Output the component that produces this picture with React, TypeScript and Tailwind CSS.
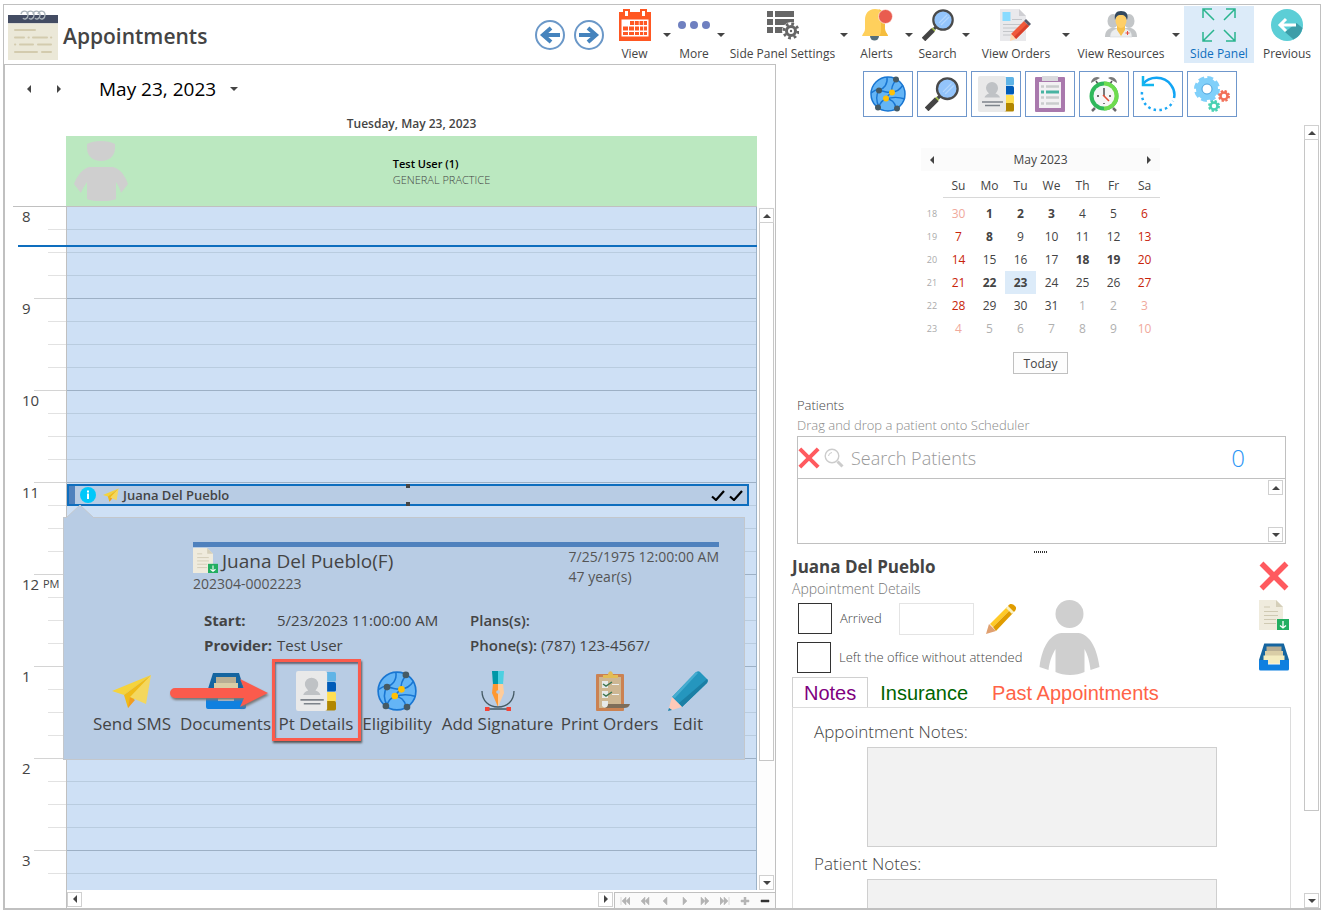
import { useState, type ReactNode } from 'react'

type IconProps = { className?: string }

const HOURS = ['8', '9', '10', '11', '12', '1', '2', '3']

const WEEKDAYS = ['Su', 'Mo', 'Tu', 'We', 'Th', 'Fr', 'Sa']

const WEEKS = [
  { no: 18, days: [30, 1, 2, 3, 4, 5, 6] },
  { no: 19, days: [7, 8, 9, 10, 11, 12, 13] },
  { no: 20, days: [14, 15, 16, 17, 18, 19, 20] },
  { no: 21, days: [21, 22, 23, 24, 25, 26, 27] },
  { no: 22, days: [28, 29, 30, 31, 1, 2, 3] },
  { no: 23, days: [4, 5, 6, 7, 8, 9, 10] },
]

// days that already have appointments
const BUSY_DAYS = [1, 2, 3, 8, 18, 19, 22, 23]

const TRIANGLES = {
  left: 'M6 0v8L2 4z',
  right: 'M2 0v8l4-4z',
  up: 'M0 6h8L4 2z',
  down: 'M0 2h8L4 6z',
}

function Triangle({ dir, className = 'w-2 h-2 text-[#444]' }: { dir: keyof typeof TRIANGLES; className?: string }) {
  return (
    <svg viewBox="0 0 8 8" className={className} fill="currentColor" aria-hidden="true">
      <path d={TRIANGLES[dir]} />
    </svg>
  )
}

function NotepadIcon({ className }: IconProps) {
  return (
    <svg viewBox="0 0 50 50" className={className} aria-hidden="true">
      <path fill="#ebe8d8" d="M0 5h50v45H0z" />
      <path fill="#434c63" d="M0 5h50v8H0z" />
      <path fill="#d9d8d2" d="M0 13h50v1H0z" />
      <g fill="none" stroke="#a9b3ba" strokeWidth="1.400">
        <path d="M13 4c1-4 7-4 7 1 0 4-4 5-5 3" />
        <path d="M19 4c1-4 7-4 7 1 0 4-4 5-5 3" />
        <path d="M25 4c1-4 7-4 7 1 0 4-4 5-5 3" />
        <path d="M30 4c1-4 7-4 7 1 0 4-4 5-5 3" />
      </g>
      <path
        stroke="#d3cbae"
        strokeWidth="2"
        strokeLinecap="round"
        d="M7 20h20M7 27.500h9M20.500 27.500h.3M25 27.500h14M43 27.500h.3M7 34.500h.3M12 34.500h13M30 34.500h13M7 42h22M34 42h9"
      />
    </svg>
  )
}

function NavArrowIcon({ className, flip }: IconProps & { flip?: boolean }) {
  return (
    <svg viewBox="0 0 32 32" className={className} fill="none" aria-hidden="true">
      <circle cx="16" cy="16" r="14" stroke="#6b98c8" strokeWidth="2" fill="#fff" />
      <path
        d={flip ? 'M6 16h17M15 9l8 7-8 7' : 'M26 16H9M17 9l-8 7 8 7'}
        stroke="#4583bd"
        strokeWidth="4"
      />
    </svg>
  )
}

function CalendarIcon({ className }: IconProps) {
  return (
    <svg viewBox="0 0 32 32" className={className} aria-hidden="true">
      <path fill="#ff5722" d="M0 3h32v29H0z" />
      <path fill="#fff" d="M2.500 10.500h27v17h-27z" />
      <path fill="#ff5722" d="M4 0h7v8H4zM21 0h7v8h-7z" />
      <path fill="#fff" d="M6 2h3v5H6zM23 2h3v5h-3z" />
      <g fill="#ff5722">
        <path d="M11 12h4v4h-4zM15.800 12h4v4h-4zM20.500 12h3.600v4h-3.600zM24.800 12h3.200v4h-3.200z" />
        <path d="M4 17.500h5v4H4zM10 17.500h5v4h-5zM16 17.500h4v4h-4zM21 17.500h3.200v4H21zM25 17.500h3v4h-3z" />
        <path d="M4 23h5v3H4zM10 23h5v3h-5zM16 23h4v3h-4zM21 23h3.200v3H21zM25 23h3v3h-3z" />
      </g>
    </svg>
  )
}

function MoreIcon({ className }: IconProps) {
  return (
    <svg viewBox="0 0 32 32" className={className} fill="#6f80c0" aria-hidden="true">
      <circle cx="4" cy="16" r="4" />
      <circle cx="16" cy="16" r="4" />
      <circle cx="28" cy="16" r="4" />
    </svg>
  )
}

function PanelSettingsIcon({ className }: IconProps) {
  return (
    <svg viewBox="0 0 32 32" className={className} aria-hidden="true">
      <path fill="#666" d="M0 2h6v6H0zM8 2h19v6H8zM0 10h6v6H0zM8 10h19v6H8zM0 18h6v6H0zM8 18h10v6H8z" />
      <circle cx="24" cy="22" r="9" fill="#fff" />
      <circle cx="24" cy="22" r="7" fill="none" stroke="#666" strokeWidth="3" strokeDasharray="2.700 2.800" />
      <circle cx="24" cy="22" r="4.500" fill="none" stroke="#666" strokeWidth="3" />
      <circle cx="24" cy="22" r="1.200" fill="#666" />
    </svg>
  )
}

function BellIcon({ className }: IconProps) {
  return (
    <svg viewBox="0 0 32 32" className={className} aria-hidden="true">
      <path fill="#546e7a" d="M9 27h9a4.500 4.500 0 0 1-9 0z" />
      <path fill="#ffd05c" d="M14 0C7 0 4 5 4 11v9c0 3-2 4-3 7h26c-1-3-3-4-3-7v-9C24 5 21 0 14 0z" />
      <path fill="#f5bd3e" d="M17 0c5 1 7 5 7 11v9c0 3 2 4 3 7h-9c2-2 2-4 2-8V11c0-6-1-10-3-11z" />
      <circle cx="24.500" cy="7.500" r="7" fill="#e95c4f" stroke="#fff" strokeWidth="0.600" />
    </svg>
  )
}

function MagnifierIcon({ className }: IconProps) {
  return (
    <svg viewBox="0 0 32 32" className={className} aria-hidden="true">
      <path stroke="#4a4a4a" strokeWidth="3" d="M15 17l-3 3" />
      <path stroke="#9dbb3f" strokeWidth="4" d="M12 20l-1.500 1.500" />
      <path stroke="#444" strokeWidth="5" d="M11 21L1.500 30.500" />
      <circle cx="21" cy="11" r="9.700" fill="#93c4fb" stroke="#4a4a4a" strokeWidth="2.200" />
      <path stroke="#b3d6fc" strokeWidth="1.200" d="M17 14l8-8M19 16l8-8" />
    </svg>
  )
}

function OrdersIcon({ className }: IconProps) {
  return (
    <svg viewBox="0 0 32 32" className={className} aria-hidden="true">
      <path fill="#e9e9ec" d="M0 0h19l7 7v25H0z" />
      <path fill="#cfcfd3" d="M19 0l7 7h-7z" />
      <path fill="#88dbff" d="M2.500 3h8v9h-8z" />
      <path stroke="#c4c6ca" strokeWidth="1" d="M12 10.500h10M3 15.500h19M3 19h17M3 22.500h13M3 26h10" />
      <path fill="#f05a3c" d="M24 12l5 5-13 13-5-5z" />
      <path fill="#d9402b" d="M27 15l2 2-13 13-2-2z" />
      <path fill="#55586a" d="M26 10l5 5-2 2-5-5z" />
      <path fill="#ffd8b0" d="M11 25l5 5-6 2z" />
    </svg>
  )
}

function ResourcesIcon({ className }: IconProps) {
  return (
    <svg viewBox="0 0 32 32" className={className} aria-hidden="true">
      <g fill="#c3c6c8">
        <ellipse cx="8" cy="12" rx="5.500" ry="7" />
        <ellipse cx="24" cy="12" rx="5.500" ry="7" />
        <path d="M0 28c0-6 3-8 6-9h20c3 1 6 3 6 9z" />
      </g>
      <path fill="#eceeef" stroke="#c9cdd0" strokeWidth="0.500" d="M5 28c0-6 4-8 9-9h4c5 1 9 3 9 9z" />
      <path fill="#f6c04c" d="M12 16h8v5l-4 6-4-6z" />
      <ellipse cx="16" cy="11.500" rx="5.500" ry="7.500" fill="#ffcf66" />
      <path fill="#34495e" d="M10 11c-1-6 1-9 6-9s8 3 6 9c-1-3-2-5-6-5s-5 2-6 5z" />
      <path stroke="#e74c3c" strokeWidth="1" d="M22.500 22v4M20.500 24h4" />
    </svg>
  )
}

function ExpandIcon({ className }: IconProps) {
  return (
    <svg viewBox="0 0 34 34" className={className} fill="none" stroke="#2ab58f" strokeWidth="1.500" aria-hidden="true">
      <path d="M1 10V1h9M1 1l11 11M24 1h9v9M33 1L22 12M1 24v9h9M1 33l11-11M24 33h9v-9M33 33L22 22" />
    </svg>
  )
}

function PreviousIcon({ className }: IconProps) {
  return (
    <svg viewBox="0 0 32 32" className={className} aria-hidden="true">
      <circle cx="16" cy="16" r="16" fill="#5cced6" />
      <path fill="#3d9da8" d="M14 23l8.500 7.500A16 16 0 0 0 31.500 19l-6-5z" />
      <path d="M25 16H9M15 10l-6 6 6 6" fill="none" stroke="#fff" strokeWidth="3" />
    </svg>
  )
}

function GlobeIcon({ className }: IconProps) {
  return (
    <svg viewBox="0 0 36 36" className={className} aria-hidden="true">
      <circle cx="18" cy="18" r="17" fill="#64b5f6" stroke="#1976d2" strokeWidth="1.500" />
      <path
        fill="none"
        stroke="#1976d2"
        strokeWidth="1.400"
        d="M9 14c5-1 9-6 8-13M9 14c6 2 10 3 13 2M26 4c-4 5-5 8-4 12M22 16c5 0 9-4 11-7M22 16c0 0-4 3-6 7M16 23c6-2 13-2 19 0M16 23c-3 1-6 4-7 8M9 14c-3 5-3 11 0 17M16 23c6 0 9 4 10 9M9 14c-3-1-5 1-8 3"
      />
      <g fill="#455a64">
        <circle cx="26" cy="3.500" r="3" />
        <circle cx="9" cy="14.500" r="3" />
        <circle cx="8" cy="31.500" r="3" />
        <circle cx="27" cy="32.500" r="3" />
      </g>
      <circle cx="22" cy="16.500" r="3" fill="#ffc107" />
      <circle cx="16" cy="22.500" r="3" fill="#ffc107" />
    </svg>
  )
}

function ContactIcon({ className }: IconProps) {
  return (
    <svg viewBox="0 0 36 36" className={className} aria-hidden="true">
      <rect x="24" y="1" width="12" height="8.500" rx="1.500" fill="#60b4e6" />
      <rect x="24" y="10" width="12" height="8.500" rx="1.500" fill="#005bb8" />
      <rect x="24" y="19" width="12" height="8.500" rx="1.500" fill="#ffdf52" />
      <rect x="24" y="27" width="12" height="8.500" rx="1.500" fill="#b18600" />
      <rect x="0" y="0" width="28" height="36" rx="2" fill="#e9e9e9" />
      <path fill="#bfc2c5" d="M14 6a6 6 0 0 1 6 6c0 2-1 4-2.500 5.500 2.500 1 4 2 4.500 4H6.500c.5-2 2-3 4.500-4C9.500 16 8 14 8 12a6 6 0 0 1 6-6z" />
      <path stroke="#7d838a" strokeWidth="1.500" d="M4 26h21M7 29.500h15" />
    </svg>
  )
}

function ChecklistIcon({ className }: IconProps) {
  return (
    <svg viewBox="0 0 30 36" className={className} aria-hidden="true">
      <rect y="1" width="30" height="35" rx="1" fill="#a979ad" />
      <path fill="#f2f0f3" d="M4 6h22v26H4z" />
      <path fill="#d9d9dd" d="M7 0h16v5H7z" />
      <path stroke="#c9cbcd" strokeWidth="2.500" d="M6 10.500h3M11 10.500h13M6 21.500h3M11 21.500h13M6 27.500h3M11 27.500h13" />
      <path stroke="#48b3a2" strokeWidth="3" d="M6 16h3M11 16h13" />
    </svg>
  )
}

function AlarmIcon({ className }: IconProps) {
  return (
    <svg viewBox="0 0 30 36" className={className} aria-hidden="true">
      <path stroke="#6b6b6b" strokeWidth="2.500" d="M6 32l-3 3M24 32l3 3" />
      <g fill="#7a7a7a">
        <path d="M2 7c0-4 5-8 9-5z" />
        <path d="M28 7c0-4-5-8-9-5z" />
      </g>
      <path stroke="#555" strokeWidth="1.500" d="M7 5l2 3M23 5l-2 3" />
      <circle cx="15" cy="20" r="14.500" fill="#2fb85b" />
      <path fill="#6ddb4f" d="M15 5.500a14.500 14.500 0 0 1 0 29z" />
      <circle cx="15" cy="20" r="10.500" fill="#f5f5f7" />
      <path stroke="#444" strokeWidth="1.400" d="M15 12v8M8 20h2M20 20h2M15 27v1" />
      <path stroke="#e04f36" strokeWidth="1.600" d="M14 19l6 6" />
    </svg>
  )
}

function ReloadIcon({ className }: IconProps) {
  return (
    <svg viewBox="0 0 36 36" className={className} fill="none" aria-hidden="true">
      <path d="M3 8C9 0 24-1 31 9c3 4 4 9 3 13" stroke="#12a5f4" strokeWidth="2.500" />
      <path d="M3 0v9h11" stroke="#12b6ee" strokeWidth="2.500" />
      <path d="M2 16c-1 9 5 18 16 18 8 0 13-4 15-9" stroke="#1aa7f5" strokeWidth="2.500" strokeDasharray="2.500 3.200" />
    </svg>
  )
}

function GearsIcon({ className }: IconProps) {
  return (
    <svg viewBox="0 0 36 36" className={className} fill="none" aria-hidden="true">
      <circle cx="13" cy="13" r="11" stroke="#80d0fa" strokeWidth="4" strokeDasharray="5.600 3.039" />
      <circle cx="13" cy="13" r="8" stroke="#80d0fa" strokeWidth="6" />
      <circle cx="13" cy="13" r="5" stroke="#4da4dd" strokeWidth="1" />
      <circle cx="30" cy="20" r="5" stroke="#f27059" strokeWidth="2" strokeDasharray="2.300 1.627" />
      <circle cx="30" cy="20" r="3.500" stroke="#f27059" strokeWidth="2.500" />
      <circle cx="20" cy="30" r="5" stroke="#49d1b2" strokeWidth="2" strokeDasharray="2.300 1.627" />
      <circle cx="20" cy="30" r="3.500" stroke="#49d1b2" strokeWidth="2.500" />
    </svg>
  )
}

function PlaneIcon({ className }: IconProps) {
  return (
    <svg viewBox="0 0 40 40" className={className} aria-hidden="true">
      <path fill="#f5d33c" d="M39 4L0 20l12 4z" />
      <path fill="#f0bb18" d="M39 4L12 24l4 13z" />
      <path fill="#f29c1f" d="M16 37l2-11 5 3z" />
      <path fill="#f4d75e" d="M39 4l-5 29-16-7z" />
    </svg>
  )
}

function InboxIcon({ className }: IconProps) {
  return (
    <svg viewBox="0 0 40 36" className={className} aria-hidden="true">
      <path fill="#1565a0" d="M7 0h26l7 22H0z" />
      <path fill="#b8ae93" d="M10 4h20v7H10z" />
      <path fill="#d9cda6" d="M8 10h24v8H8z" />
      <path fill="#f3ecc0" d="M6 16h28v11H6z" />
      <path fill="#0f80e0" d="M0 22h12v6h16v-6h12v12a2 2 0 0 1-2 2H2a2 2 0 0 1-2-2z" />
    </svg>
  )
}

function SignatureIcon({ className }: IconProps) {
  return (
    <svg viewBox="0 0 40 40" className={className} aria-hidden="true">
      <path fill="#0097a7" d="M14 0h6v14h-5z" />
      <path fill="#4dd0e1" d="M20 0h6l-1 14h-5z" />
      <path fill="#ff9830" d="M15 13h5v23l-6-14z" />
      <path fill="#ffcc99" d="M20 13h5l1 9-6 14z" />
      <path d="M4 20c0 10 7 16 16 16s16-6 16-16M8 38h24" fill="none" stroke="#455a64" strokeWidth="1.300" />
      <circle cx="20" cy="21" r="1.800" fill="#b8cce4" />
      <path fill="#f44336" d="M7 36h4.500v4H7zM28.500 36H33v4h-4.500z" />
    </svg>
  )
}

function ClipboardIcon({ className }: IconProps) {
  return (
    <svg viewBox="0 0 40 40" className={className} aria-hidden="true">
      <rect x="6" y="3" width="28" height="37" rx="1" fill="#cb8252" />
      <path fill="#ceb793" d="M9 6h22v31H9z" />
      <path fill="#e3bd55" d="M13 7V4h5c0-5 5-5 5 0h5v3z" />
      <path fill="#e7eaea" d="M12 10h6v7h-6zM12 20h6v7h-6zM12 30h6v5c-2 2-4 2-6 0z" />
      <path fill="none" stroke="#3c7551" strokeWidth="1.500" d="M13 13l3 2 6-4M13 23l3 2 6-4" />
      <path stroke="#eef0f0" strokeWidth="1.200" d="M22 13.500h7M22 23.500h7" />
      <path fill="#7e6d59" d="M18 33h22c-1 3-3 4-6 4H15c2-1 3-2 3-4z" />
    </svg>
  )
}

function CrayonIcon({ className }: IconProps) {
  return (
    <svg viewBox="0 0 40 40" className={className} aria-hidden="true">
      <path fill="#2596be" d="M28 1c2-1 3-1 4 0l7 7c1 1 1 2 0 4L14 36 4 26z" />
      <path fill="#45acd0" d="M28 1l2 1L7 27l-3-1z" />
      <path fill="#1b7fa5" d="M39 8c1 1 1 2 0 4L14 36l-3-4z" />
      <path fill="#ffc9b8" d="M4 26l10 10-10 3-3-2z" />
      <path fill="#2084a9" d="M1 37l3 2-4 1z" />
    </svg>
  )
}

function PencilIcon({ className }: IconProps) {
  return (
    <svg viewBox="0 0 30 30" className={className} aria-hidden="true">
      <path fill="#e0a070" d="M3 20l7 7-10 3z" />
      <path fill="#ffca28" d="M4 20L21 3l3 3L7 23z" />
      <path fill="#e09c00" d="M24 6l3 3L10 27l-3-4z" />
      <path fill="#f8f0c0" d="M20 4l2-2 6 6-2 2z" />
      <path fill="#e09c00" d="M22 2c2-3 5-2 7 0s1 4-1 6z" />
    </svg>
  )
}

function DocumentIcon({ className }: IconProps) {
  return (
    <svg viewBox="0 0 30 30" className={className} aria-hidden="true">
      <path fill="#efebdd" d="M0 0h17l7 7v23H0z" />
      <path fill="#d5cfb9" d="M17 0l7 7h-7z" />
      <path stroke="#cfc9b2" strokeWidth="1" d="M5 7h6M5 11.500h14M5 15.500h14M5 19.500h12M5 23.500h12" />
      <path fill="#22ae61" d="M18 19h12v11H18z" />
      <path d="M24 21v7M21 25.500l3 2.500 3-2.500" fill="none" stroke="#fff" strokeWidth="1.300" />
    </svg>
  )
}

function CrossIcon({ className }: IconProps) {
  return (
    <svg viewBox="0 0 30 30" className={className} aria-hidden="true">
      <path d="M2.500 2.500l25 25M27.500 2.500l-25 25" stroke="#ff5a5f" strokeWidth="5.500" />
    </svg>
  )
}

function PersonIcon({ className }: IconProps) {
  return (
    <svg viewBox="0 0 60 75" className={className} fill="#cfcfcf" aria-hidden="true">
      <circle cx="30" cy="14" r="14" />
      <path d="M22 33h17c9 1 18 11 21 34l-9 3c-1-9-3-16-6-21v23c-8 4-21 4-29 0V49c-3 5-6 12-7 21l-9-3c3-23 12-33 22-34z" />
    </svg>
  )
}

function DoctorIcon({ className }: IconProps) {
  return (
    <svg viewBox="0 0 54 60" className={className} fill="#cfcfcf" aria-hidden="true">
      <path d="M13 3c7-4 21-4 28 0v4c0 9-7 13-14 13S13 16 13 7z" />
      <path d="M15 26h24c8 2 12 9 15 17l-7 9c-1-4-3-8-5-11v17c-7 3-22 3-29 0V41c-2 3-5 7-6 11l-7-9c3-8 8-15 15-17z" />
    </svg>
  )
}

function InfoIcon({ className }: IconProps) {
  return (
    <svg viewBox="0 0 16 16" className={className} aria-hidden="true">
      <circle cx="8" cy="8" r="8" fill="#00c8fa" />
      <path fill="#fff" d="M7 6.500h2V12H7zM7 3.500h2v2H7z" />
    </svg>
  )
}

function CheckIcon({ className }: IconProps) {
  return (
    <svg viewBox="0 0 14 12" className={className} aria-hidden="true">
      <path d="M1 7.500l4 3.500L13 2" fill="none" stroke="#000" strokeWidth="2.200" />
    </svg>
  )
}

const NAV_GLYPHS = [
  { label: 'First', d: 'M1 0v8M6 0v8L2 4zM10 0v8L6 4z' },
  { label: 'Previous page', d: 'M5 0v8L1 4zM9 0v8L5 4z' },
  { label: 'Previous day', d: 'M7 0v8L3 4z' },
  { label: 'Next day', d: 'M3 0v8l4-4z' },
  { label: 'Next page', d: 'M1 0v8l4-4zM5 0v8l4-4z' },
  { label: 'Last', d: 'M0 0v8l4-4zM4 0v8l4-4zM9 0v8' },
  { label: 'Zoom in', d: 'M4 0h2v8H4zM1 3h8v2H1z' },
  { label: 'Zoom out', d: 'M1 3h8v2H1z' },
]

function Tool({
  icon,
  label,
  width,
  caret = true,
}: {
  icon: ReactNode
  label: string
  width: string
  caret?: boolean
}) {
  return (
    <div className="flex items-center">
      <button className={`${width} h-full flex flex-col items-center pt-1 text-xs leading-4 whitespace-nowrap`}>
        <span className="h-8 flex items-center">{icon}</span>
        <span className="mt-[5px]">{label}</span>
      </button>
      {caret && (
        <button className="w-3 flex justify-center" aria-label={`${label} options`}>
          <Triangle dir="down" />
        </button>
      )}
    </div>
  )
}

function ScrollButton({ dir, label }: { dir: keyof typeof TRIANGLES; label: string }) {
  return (
    <button aria-label={label} className="w-[15px] h-[15px] shrink-0 border border-[#d0d0d0] bg-white flex items-center justify-center">
      <Triangle dir={dir} />
    </button>
  )
}

function Scheduler() {
  return (
    <div className="flex-1 min-h-0 flex flex-col">
      {/* Date picker */}
      <div className="h-12 flex items-center pl-5">
        <button aria-label="Previous day" className="w-[10px]">
          <Triangle dir="left" />
        </button>
        <button aria-label="Next day" className="ml-5 w-[10px]">
          <Triangle dir="right" />
        </button>
        <button className="ml-[34px] flex items-center gap-[14px] text-[19px] text-black">
          May 23, 2023
          <Triangle dir="down" />
        </button>
      </div>
      <div className="h-[23px] pl-[61px] pr-[18px] text-center text-[12px] leading-[21px] font-semibold">
        Tuesday, May 23, 2023
      </div>
      <div className="ml-[61px] mr-[18px] h-[70px] bg-[#bbe8c0] flex items-center">
        <DoctorIcon className="w-[54px] h-[60px] ml-2" />
        <div className="flex-1 flex justify-center pt-[2px] text-[11px] leading-4 pr-[2px]">
          <div>
            <p className="font-semibold text-black">Test User (1)</p>
            <p className="font-light">GENERAL PRACTICE</p>
          </div>
        </div>
      </div>
      <div className="ml-2 mr-[18px] border-t border-[#c0c0c0]" />

      <div className="flex-1 min-h-0 flex">
        <div className="flex-1 min-w-0 relative flex overflow-hidden">
          {/* Ruler */}
          <div className="w-[61px] shrink-0">
            {HOURS.map((hour) => (
              <div key={hour} className="h-[92px] relative pl-[17px]">
                <span className="block text-[15px] leading-[18px]">{hour}</span>
                {hour === '12' && <span className="absolute top-px left-[38px] text-[11px] leading-4 bg-white">PM</span>}
                <div className="absolute top-[22px] left-[43px] right-0 border-t border-[#e2e2e2]" />
                <div className="absolute top-[45px] left-[43px] right-0 border-t border-[#e2e2e2]" />
                <div className="absolute top-[68px] left-[43px] right-0 border-t border-[#e2e2e2]" />
                <div className="absolute top-[91px] left-[29px] right-0 border-t border-[#d4d4d4]" />
              </div>
            ))}
          </div>
          {/* Day column */}
          <div className="flex-1 bg-[#cee0f5] border-l border-l-[#c0c0c0] border-r border-r-[#9db3c8] overflow-hidden">
            {HOURS.map((hour) => (
              <div key={hour}>
                <div className="h-[23px] border-b border-[#b9ccdf]" />
                <div className="h-[23px] border-b border-[#b9ccdf]" />
                <div className="h-[23px] border-b border-[#b9ccdf]" />
                <div className="h-[23px] border-b border-[#9db0c5]" />
              </div>
            ))}
          </div>
          {/* Current time */}
          <div className="absolute top-[38px] left-[13px] right-0 h-[2px] bg-[#0e6ebe]" />

          <button className="absolute top-[277px] left-[62px] right-2 h-[22px] border-2 border-[#0e6ebe] bg-[#b8cce4] flex items-center text-[13px] leading-5 font-semibold">
            <span className="w-[6px] h-full bg-[#4f81bd]" />
            <InfoIcon className="ml-[5px] w-4 h-4" />
            <PlaneIcon className="ml-[7px] w-4 h-4" />
            <span className="ml-1">Juana Del Pueblo</span>
            <span className="ml-auto mr-1 flex gap-1">
              <CheckIcon className="w-[14px] h-3" />
              <CheckIcon className="w-[14px] h-3" />
            </span>
            <span className="absolute -top-[2px] left-1/2 -ml-[2px] w-1 h-1 bg-[#444]" />
            <span className="absolute -bottom-[2px] left-1/2 -ml-[2px] w-1 h-1 bg-[#444]" />
          </button>

          <AppointmentPopup />
        </div>
        <div className="w-[18px] px-[2px] pt-px flex flex-col bg-[#fdfdfd]">
          <ScrollButton dir="up" label="Scroll schedule up" />
          <div className="flex-[4.700] w-[15px] border border-[#c6c6c6] border-t-0 bg-white" />
          <div className="flex-1" />
          <ScrollButton dir="down" label="Scroll schedule down" />
        </div>
      </div>

      <div className="h-[18px] flex">
        <div className="w-[62px] border-r border-[#c0c0c0]" />
        <div className="flex-1 flex items-center justify-between">
          <ScrollButton dir="left" label="Scroll schedule left" />
          <ScrollButton dir="right" label="Scroll schedule right" />
        </div>
        <div className="ml-px w-[161px] mt-[2px] border-t border-l border-[#c0c0c0] bg-[#fafafa] flex items-center justify-around">
          {NAV_GLYPHS.map((glyph) => (
            <button key={glyph.label} aria-label={glyph.label} className={glyph.label === 'Zoom out' ? 'text-[#333]' : 'text-[#b4b4b4]'}>
              <svg viewBox="0 0 10 8" className="w-[10px] h-2" fill="currentColor" stroke="currentColor" strokeWidth="0.500">
                <path d={glyph.d} />
              </svg>
            </button>
          ))}
        </div>
      </div>
    </div>
  )
}

const POPUP_ACTIONS = [
  { label: 'Send SMS', width: 'w-[88px]', icon: <PlaneIcon className="w-10 h-10" /> },
  { label: 'Documents', width: 'w-[99px]', icon: <InboxIcon className="w-10 h-9" /> },
  { label: 'Pt Details', width: 'w-[82px]', icon: <ContactIcon className="w-10 h-10" /> },
  { label: 'Eligibility', width: 'w-20', icon: <GlobeIcon className="w-10 h-10" /> },
  { label: 'Add Signature', width: 'w-[121px]', icon: <SignatureIcon className="w-10 h-10" /> },
  { label: 'Print Orders', width: 'w-[103px]', icon: <ClipboardIcon className="w-10 h-10" /> },
  { label: 'Edit', width: 'w-[54px]', icon: <CrayonIcon className="w-10 h-10" /> },
]

function AppointmentPopup() {
  return (
    <div className="absolute top-[310px] left-[58px] w-[682px] h-[243px] border border-[#c3c7cc] bg-[#b8cce4]">
      <svg viewBox="0 0 28 13" className="absolute -top-[13px] left-[2px] w-7 h-[13px]" aria-hidden="true">
        <path d="M0 13L14 0l14 13z" fill="#b8cce4" />
        <path d="M0 13L14 0l14 13" fill="none" stroke="#c3c7cc" />
      </svg>

      <div className="mt-6 ml-[129px] mr-[25px] border-t-[5px] border-[#4f81bd] flex justify-between">
        <div>
          <h2 className="h-[27px] flex items-center gap-1 text-[19px] leading-7">
            <DocumentIcon className="w-[25px] h-[25px]" />
            Juana Del Pueblo(F)
          </h2>
          <p className="text-sm leading-5 text-[#555]">202304-0002223</p>
        </div>
        <div className="text-sm leading-5 text-[#555]">
          <p>7/25/1975 12:00:00 AM</p>
          <p>47 year(s)</p>
        </div>
      </div>

      <dl className="mt-[14px] ml-[140px] grid grid-cols-[73px_193px_auto] text-[15px] leading-[25px]">
        <dt className="font-bold">Start:</dt>
        <dd>5/23/2023 11:00:00 AM</dd>
        <div className="font-semibold">Plans(s):</div>
        <dt className="font-bold">Provider:</dt>
        <dd>Test User</dd>
        <div>
          <span className="font-semibold">Phone(s):</span> (787) 123-4567/
        </div>
      </dl>

      <div className="mt-[13px] ml-6 flex">
        {POPUP_ACTIONS.map((action) => (
          <button key={action.label} className={`${action.width} flex flex-col items-center text-[17px] leading-[26px] whitespace-nowrap`}>
            <span className="h-10 flex items-center">{action.icon}</span>
            {action.label}
          </button>
        ))}
      </div>

      {/* Callout pointing at Pt Details */}
      <div className="absolute top-[141px] left-[208px] w-[89px] h-[82px] border-[3px] border-[#fb5b4c] shadow-[1px_2px_2px_#555,inset_1px_2px_2px_#667]" />
      <svg viewBox="0 0 98 30" className="absolute top-[160px] left-[106px] w-[98px] h-[30px] drop-shadow-[1px_2px_1px_#777]" aria-hidden="true">
        <path fill="#fb5b4c" d="M5 10h69L70 1l28 14-28 14 4-9H5a5 5 0 0 1 0-10z" />
      </svg>
    </div>
  )
}

function dayClass(day: number, week: number, col: number) {
  const outside = (week === 0 && day > 7) || (week > 3 && day < 15)
  const weekend = col === 0 || col === 6
  if (outside) return weekend ? 'text-[#f0a99c]' : 'text-[#b0b0b0]'
  if (weekend) return 'text-[#c8240a]'
  if (BUSY_DAYS.includes(day)) return 'font-bold'
  return ''
}

function MonthCalendar() {
  return (
    <div className="w-[239px] mx-auto text-[12px]">
      <div className="h-[23px] flex items-center justify-between px-[7px] bg-[#fbfbfb]">
        <button aria-label="Previous month">
          <Triangle dir="left" />
        </button>
        May 2023
        <button aria-label="Next month">
          <Triangle dir="right" />
        </button>
      </div>
      <table className="mt-[3px] w-full table-fixed text-center border-separate border-spacing-0">
        <thead>
          <tr className="h-6">
            <td className="w-[22px]" />
            {WEEKDAYS.map((day) => (
              <th key={day} className="font-normal border-b border-[#d8d8d8] p-0">{day}</th>
            ))}
          </tr>
          <tr className="h-1" />
        </thead>
        <tbody>
          {WEEKS.map((week, row) => (
            <tr key={week.no} className="h-[23px]">
              <th className="p-0 font-normal text-[9px] text-[#aaa]">{week.no}</th>
              {week.days.map((day, col) => (
                <td key={col} className={`p-0 ${dayClass(day, row, col)} ${row === 3 && day === 23 ? 'bg-[#dcebf9]' : ''}`}>
                  {day}
                </td>
              ))}
            </tr>
          ))}
        </tbody>
      </table>
      <button className="block mx-auto mt-3 w-[55px] h-[22px] border border-[#c0c0c0] bg-[#fdfdfd] leading-[22px]">Today</button>
    </div>
  )
}

const TABS = [
  { label: 'Notes', color: 'text-[#800080]' },
  { label: 'Insurance', color: 'text-[#006400]' },
  { label: 'Past Appointments', color: 'text-[#ff6347]' },
]

function AppointmentDetails() {
  const [tab, setTab] = useState('Notes')

  return (
    <section className="pl-[15px] pr-[13px] font-light">
      <div className="flex">
        <div className="w-[247px]">
          <h2 className="text-[17px] leading-6 font-bold">Juana Del Pueblo</h2>
          <p className="text-sm leading-5 text-[#777]">Appointment Details</p>
          <div className="pl-[6px] h-[39px] flex items-center text-[13px]">
            <input id="arrived" type="checkbox" className="appearance-none w-[34px] h-[31px] border border-[#333] bg-white" />
            <label htmlFor="arrived" className="ml-2 w-[59px]">Arrived</label>
            <input aria-label="Arrival time" className="w-[75px] h-8 border border-[#e4e4e4]" />
            <button aria-label="Edit arrival" className="ml-3">
              <PencilIcon className="w-[30px] h-[30px]" />
            </button>
          </div>
          <div className="pl-[5px] h-[39px] flex items-center text-[13px] whitespace-nowrap">
            <input id="left-office" type="checkbox" className="appearance-none w-[34px] h-[31px] border border-[#333] bg-white" />
            <label htmlFor="left-office" className="ml-2">Left the office without attended</label>
          </div>
        </div>
        <PersonIcon className="self-end mb-[2px] w-[61px] h-[75px]" />
        <div className="ml-auto mr-[2px] pt-[6px] flex flex-col items-center">
          <button aria-label="Close details"><CrossIcon className="w-[30px] h-[30px]" /></button>
          <button aria-label="Download document" className="mt-[9px]"><DocumentIcon className="w-[30px] h-[30px]" /></button>
          <button aria-label="Documents" className="mt-[13px]"><InboxIcon className="w-[30px] h-7" /></button>
        </div>
      </div>

      <div className="flex font-['Liberation_Sans',sans-serif] font-normal text-xl">
        {TABS.map((item) => (
          <button
            key={item.label}
            onClick={() => setTab(item.label)}
            className={`h-[30px] px-[11px] border border-b-0 leading-6 ${item.color} ${tab === item.label ? 'relative -mb-px border-[#d0d0d0] bg-white' : 'border-transparent'}`}
          >
            {item.label}
          </button>
        ))}
      </div>
      <div className="border border-[#dcdcdc] pt-3 pl-[21px] pr-[73px] text-[17px] leading-6">
        <label htmlFor="appointment-notes" className="block">Appointment Notes:</label>
        <textarea id="appointment-notes" className="mt-[3px] ml-[53px] block w-[350px] h-[100px] resize-none border border-[#cfcfcf] bg-[#f2f2f2]" />
        <label htmlFor="patient-notes" className="block mt-[5px]">Patient Notes:</label>
        <textarea id="patient-notes" className="mt-[3px] ml-[53px] block w-[350px] h-[100px] resize-none border border-[#cfcfcf] bg-[#f2f2f2]" />
      </div>
    </section>
  )
}

const SHORTCUTS = [
  { label: 'Eligibility', icon: <GlobeIcon className="w-9 h-9" /> },
  { label: 'Search', icon: <MagnifierIcon className="w-[34px] h-[34px]" /> },
  { label: 'Patient details', icon: <ContactIcon className="w-9 h-9" /> },
  { label: 'Checklist', icon: <ChecklistIcon className="w-[30px] h-9" /> },
  { label: 'Reminders', icon: <AlarmIcon className="w-[30px] h-9" /> },
  { label: 'Refresh', icon: <ReloadIcon className="w-9 h-9" /> },
  { label: 'Settings', icon: <GearsIcon className="w-9 h-9" /> },
]

function SidePanel() {
  return (
    <aside className="w-[544px] shrink-0 flex flex-col min-h-0 pl-px pt-[7px]">
      <div className="h-[49px] pl-[3px] flex justify-center gap-1">
        {SHORTCUTS.map((item) => (
          <button key={item.label} aria-label={item.label} className="w-[50px] h-[46px] border border-[#6f97cc] flex items-center justify-center">
            {item.icon}
          </button>
        ))}
      </div>
      <div className="flex-1 min-h-0 flex">
        <div className="flex-1 overflow-hidden pt-7">
          <MonthCalendar />
          <section className="mt-[21px] pl-5 pr-[18px] font-light">
            <h2 className="text-[13px] leading-5">Patients</h2>
            <p className="text-[13px] leading-5 text-[#888]">Drag and drop a patient onto Scheduler</p>
            <div className="mt-px h-[43px] border border-[#c0c0c0] flex items-center">
              <button aria-label="Clear search"><CrossIcon className="w-[22px] h-[22px]" /></button>
              <svg viewBox="0 0 20 20" className="ml-1 w-5 h-5" fill="none" stroke="#ccc" aria-hidden="true">
                <circle cx="8" cy="8" r="6.800" strokeWidth="1.400" />
                <path d="M4.500 8A4 4 0 0 1 8 4.500" />
                <path d="M13.500 13.500l5 5" strokeWidth="3" />
              </svg>
              <input aria-label="Search patients" placeholder="Search Patients" className="ml-[7px] pt-[2px] flex-1 text-[18px] placeholder:text-[#999] outline-none" />
              <span className="mr-10 text-2xl text-[#2b95f5]">0</span>
            </div>
            <div className="h-[65px] border border-t-0 border-[#c0c0c0] px-[2px] py-px flex flex-col items-end justify-between">
              <ScrollButton dir="up" label="Scroll patients up" />
              <ScrollButton dir="down" label="Scroll patients down" />
            </div>
          </section>
          <div className="mt-[7px] mb-[2px] mx-auto w-[13px] h-[2px] bg-[repeating-linear-gradient(90deg,#333_0_1px,transparent_1px_2px)]" />
          <AppointmentDetails />
        </div>
        <div className="w-4 pt-[5px] flex flex-col">
          <ScrollButton dir="up" label="Scroll panel up" />
          <div className="flex-[8.200] w-[15px] border border-t-0 border-[#c6c6c6]" />
          <div className="flex-1" />
          <ScrollButton dir="down" label="Scroll panel down" />
        </div>
      </div>
    </aside>
  )
}

export default function App() {
  return (
    <div className="h-screen bg-white pl-[3px] pr-[7px] pt-1 pb-1 font-['Open_Sans','Noto_Sans',sans-serif] text-[#444]">
      <div className="h-full flex flex-col border-t border-r border-[#c0c0c0] overflow-hidden">
        <header className="h-[59px] shrink-0 flex border-l border-[#c0c0c0]">
          <div className="flex items-center gap-[5px] pl-1">
            <NotepadIcon className="w-[50px] h-[50px]" />
            <h1 className="pt-1 text-[21px] font-semibold">Appointments</h1>
          </div>
          <div className="ml-auto flex">
            <div className="flex items-center gap-[7px] mr-[3px]">
              <button aria-label="Back"><NavArrowIcon className="w-8 h-8" /></button>
              <button aria-label="Forward"><NavArrowIcon flip className="w-8 h-8" /></button>
            </div>
            <Tool label="View" width="w-[53px]" icon={<CalendarIcon className="w-8 h-8" />} />
            <Tool label="More" width="w-[42px]" icon={<MoreIcon className="w-8 h-8" />} />
            <Tool label="Side Panel Settings" width="w-[111px]" icon={<PanelSettingsIcon className="w-8 h-8" />} />
            <Tool label="Alerts" width="w-[53px]" icon={<BellIcon className="w-8 h-8" />} />
            <Tool label="Search" width="w-[45px]" icon={<MagnifierIcon className="w-8 h-8" />} />
            <Tool label="View Orders" width="w-[88px]" icon={<OrdersIcon className="w-8 h-8" />} />
            <Tool label="View Resources" width="w-[98px]" icon={<ResourcesIcon className="w-8 h-8" />} />
            <div className="mb-px ml-[2px] flex bg-[#dcebf9] text-[#0e6ebe] shadow-[inset_0_1px_white]">
              <Tool label="Side Panel" width="w-[70px]" caret={false} icon={<ExpandIcon className="w-[34px] h-[34px]" />} />
            </div>
            <Tool label="Previous" width="w-[66px]" caret={false} icon={<PreviousIcon className="w-8 h-8" />} />
          </div>
        </header>
        <div className="flex-1 min-h-0 flex border-b-2 border-[#c0c0c0]">
          <main className="flex-1 min-w-0 flex flex-col border-l-2 border-t border-r border-[#c0c0c0]">
            <Scheduler />
          </main>
          <SidePanel />
        </div>
      </div>
    </div>
  )
}
